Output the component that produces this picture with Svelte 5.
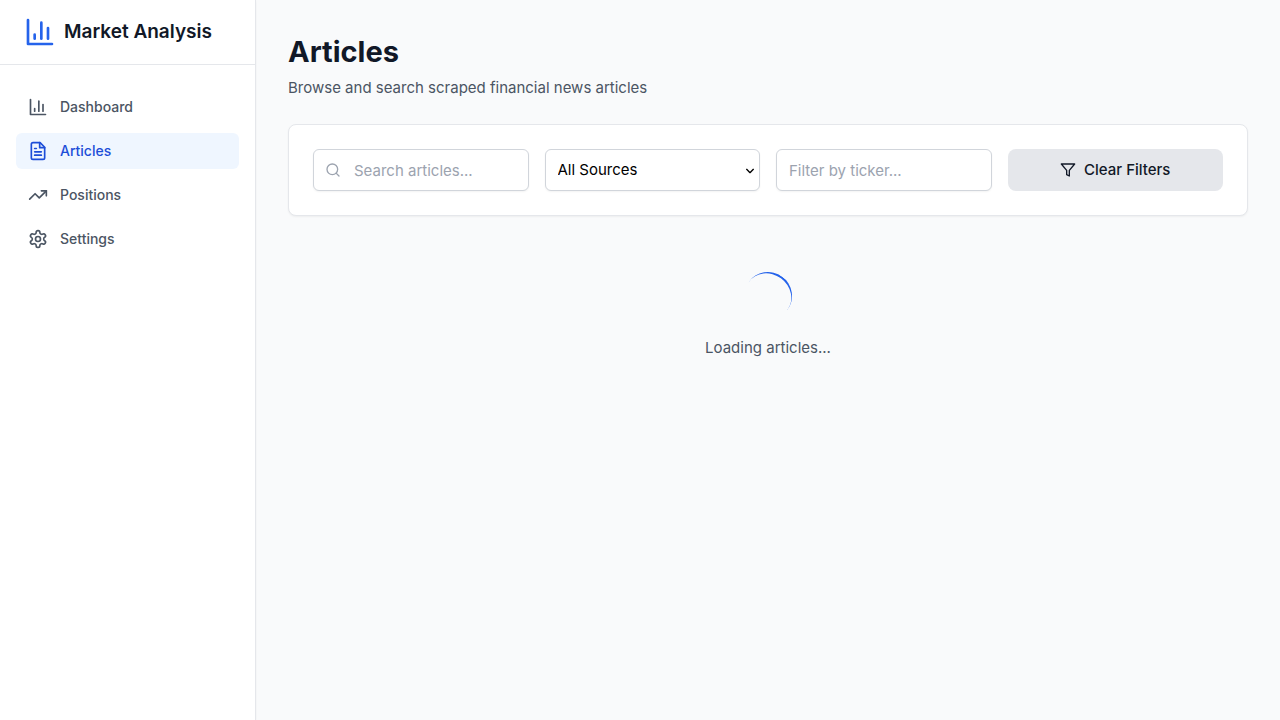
<script>
  const navItems = [
    { label: 'Dashboard', icon: 'chart' },
    { label: 'Articles', icon: 'file' },
    { label: 'Positions', icon: 'trend' },
    { label: 'Settings', icon: 'gear' }
  ];

  const icons = {
    chart: ['M3 3v18h18', 'M18 17V9', 'M13 17V5', 'M8 17v-3'],
    file: [
      'M14.5 2H6a2 2 0 0 0-2 2v16a2 2 0 0 0 2 2h12a2 2 0 0 0 2-2V7.5L14.5 2z',
      'M14 2v6h6',
      'M10 9H8',
      'M16 13H8',
      'M16 17H8'
    ],
    trend: ['M22 7 13.5 15.5 8.5 10.5 2 17', 'M16 7h6v6'],
    gear: [
      'M12.22 2h-.44a2 2 0 0 0-2 2v.18a2 2 0 0 1-1 1.73l-.43.25a2 2 0 0 1-2 0l-.15-.08a2 2 0 0 0-2.73.73l-.22.38a2 2 0 0 0 .73 2.73l.15.1a2 2 0 0 1 1 1.72v.51a2 2 0 0 1-1 1.74l-.15.09a2 2 0 0 0-.73 2.73l.22.38a2 2 0 0 0 2.73.73l.15-.08a2 2 0 0 1 2 0l.43.25a2 2 0 0 1 1 1.73V20a2 2 0 0 0 2 2h.44a2 2 0 0 0 2-2v-.18a2 2 0 0 1 1-1.73l.43-.25a2 2 0 0 1 2 0l.15.08a2 2 0 0 0 2.73-.73l.22-.39a2 2 0 0 0-.73-2.73l-.15-.08a2 2 0 0 1-1-1.74v-.5a2 2 0 0 1 1-1.74l.15-.09a2 2 0 0 0 .73-2.73l-.22-.38a2 2 0 0 0-2.73-.73l-.15.08a2 2 0 0 1-2 0l-.43-.25a2 2 0 0 1-1-1.73V4a2 2 0 0 0-2-2z',
      'M15 12a3 3 0 1 1-6 0 3 3 0 0 1 6 0z'
    ],
    search: ['M19 11a8 8 0 1 1-16 0 8 8 0 0 1 16 0z', 'm21 21-4.3-4.3'],
    funnel: ['M22 3H2l8 9.46V19l4 2v-8.54L22 3z'],
    chevron: ['M7 11l5 5 5-5']
  };

  let active = $state('Articles');
  let search = $state('');
  let source = $state('');
  let ticker = $state('');

  function clearFilters() {
    search = '';
    source = '';
    ticker = '';
  }
</script>

{#snippet icon(name, kind)}
  <svg class="icon {kind}" viewBox="0 0 24 24" aria-hidden="true">
    {#each icons[name] as d}
      <path {d} />
    {/each}
  </svg>
{/snippet}

<div class="app">
  <aside class="sidebar">
    <div class="brand">
      {@render icon('chart', 'large')}
      <span>Market Analysis</span>
    </div>
    <nav aria-label="Main">
      {#each navItems as item}
        <a
          href="#{item.label.toLowerCase()}"
          class:active={active === item.label}
          aria-current={active === item.label ? 'page' : undefined}
          onclick={() => (active = item.label)}
        >
          {@render icon(item.icon, 'medium')}
          {item.label}
        </a>
      {/each}
    </nav>
  </aside>

  <main>
    <header>
      <h1>Articles</h1>
      <p>Browse and search scraped financial news articles</p>
    </header>

    <section class="filters" aria-label="Filters">
      <div class="field search">
        {@render icon('search', 'small')}
        <input type="text" aria-label="Search articles" placeholder="Search articles..." bind:value={search} />
      </div>
      <div class="field source">
        <select aria-label="Source" bind:value={source}>
          <option value="">All Sources</option>
        </select>
        {@render icon('chevron', 'small')}
      </div>
      <input type="text" aria-label="Filter by ticker" placeholder="Filter by ticker..." bind:value={ticker} />
      <button type="button" onclick={clearFilters}>
        {@render icon('funnel', 'small')}
        Clear Filters
      </button>
    </section>

    <div class="loading" role="status">
      <div class="spinner"></div>
      <p>Loading articles...</p>
    </div>
  </main>
</div>

<style>
  :global(body) {
    margin: 0;
    background: #f9fafb;
  }

  .app, .app * {
    box-sizing: border-box;
  }

  .app {
    display: flex;
    min-height: 100vh;
    font-family: Inter, sans-serif;
    font-size: 15px;
    line-height: 24px;
    color: #111827;
    -webkit-font-smoothing: antialiased;
  }

  .icon {
    flex: none;
    fill: none;
    stroke: currentColor;
    stroke-width: 2;
    stroke-linecap: round;
    stroke-linejoin: round;
  }

  .large {
    width: 32px;
    height: 32px;
    color: #2563eb;
  }

  .medium {
    width: 20px;
    height: 20px;
  }

  .small {
    width: 16px;
    height: 16px;
  }

  .sidebar {
    flex: none;
    width: 256px;
    background: #fff;
    border-right: 1px solid #e5e7eb;
    box-shadow: 0 1px 2px rgba(0, 0, 0, 0.05);
  }

  .brand {
    display: flex;
    align-items: center;
    gap: 8px;
    padding: 16px 24px;
    border-bottom: 1px solid #e5e7eb;
    font-size: 19px;
    line-height: 28px;
    font-weight: 600;
  }

  nav {
    display: flex;
    flex-direction: column;
    gap: 8px;
    padding: 24px 16px;
  }

  nav a {
    display: flex;
    align-items: center;
    gap: 12px;
    padding: 8px 12px;
    border-radius: 6px;
    font-size: 14px;
    line-height: 20px;
    font-weight: 500;
    color: #4b5563;
    text-decoration: none;
  }

  nav a.active {
    background: #eff6ff;
    color: #1d4ed8;
  }

  main {
    flex: 1;
    min-width: 0;
    padding: 32px;
  }

  h1 {
    margin: 0 0 4px;
    font-size: 29px;
    line-height: 40px;
    font-weight: 700;
  }

  p {
    margin: 0;
    color: #4b5563;
  }

  .filters {
    display: grid;
    grid-template-columns: repeat(4, minmax(0, 1fr));
    gap: 16px;
    margin-top: 24px;
    padding: 24px;
    background: #fff;
    border: 1px solid #e5e7eb;
    border-radius: 8px;
    box-shadow: 0 1px 2px rgba(0, 0, 0, 0.05);
  }

  .field {
    position: relative;
  }

  .field .icon {
    position: absolute;
    top: 13px;
    pointer-events: none;
  }

  .search .icon {
    left: 12px;
    color: #9ca3af;
  }

  .source .icon {
    right: 2px;
    color: #000;
  }

  input,
  select,
  button {
    width: 100%;
    height: 42px;
    margin: 0;
    padding: 8px 12px;
    border: 1px solid #d1d5db;
    border-radius: 6px;
    background-color: #fff;
    font: inherit;
    color: #000;
    box-shadow: 0 1px 2px rgba(0, 0, 0, 0.05);
  }

  select {
    appearance: none;
    display: block;
  }

  .search input {
    padding-left: 40px;
  }

  input::placeholder {
    color: #9ca3af;
    opacity: 1;
  }

  button {
    display: flex;
    align-items: center;
    justify-content: center;
    gap: 8px;
    border: 0;
    border-radius: 8px;
    background: #e5e7eb;
    box-shadow: none;
    color: #111827;
    font-weight: 500;
    cursor: pointer;
  }

  .loading {
    display: flex;
    flex-direction: column;
    align-items: center;
    gap: 16px;
    padding: 56px 0 48px;
  }

  .spinner {
    width: 48px;
    height: 48px;
    border-radius: 50%;
    border-bottom: 2px solid #2563eb;
    transform: rotate(216deg);
  }
</style>
